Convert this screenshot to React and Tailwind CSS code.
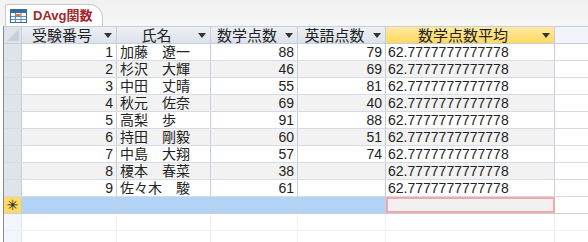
import React from "react";

const rows = [
  [1, "加藤　遼一", 88, 79],
  [2, "杉沢　大輝", 46, 69],
  [3, "中田　丈晴", 55, 81],
  [4, "秋元　佐奈", 69, 40],
  [5, "高梨　歩", 91, 88],
  [6, "持田　剛毅", 60, 51],
  [7, "中島　大翔", 57, 74],
  [8, "榎本　春菜", 38, null],
  [9, "佐々木　駿", 61, null],
];

const AVG = "62.7777777777778";

function Arrow() {
  return (
    <svg width="8" height="5" viewBox="0 0 8 5" className="shrink-0">
      <path d="M0 0H8L4 5Z" fill="#333" />
    </svg>
  );
}

function Head({ w, label, active }) {
  return (
    <div
      className={`${w} h-full flex items-center border-r border-[#c5cedb] ${
        active ? "bg-gradient-to-b from-[#ffeaa0] to-[#ffd85e]" : "bg-gradient-to-b from-[#edf0f5] to-[#dde2ea]"
      }`}
    >
      <div className="flex-1 text-center text-[15px] leading-[16px] text-[#222] font-['Noto_Sans_CJK_JP',sans-serif]">
        {label}
      </div>
      <div className="pr-[4px] pl-[2px] flex items-center">
        <Arrow />
      </div>
    </div>
  );
}

const num = "font-['Liberation_Sans',sans-serif] text-[14px]";
const jp = "font-['Liberation_Sans','Noto_Sans_CJK_JP',sans-serif] text-[14px]";

export default function App() {
  return (
    <div className="w-[588px] h-[242px] bg-white overflow-hidden flex flex-col text-[#222]">
      {/* tab strip */}
      <div className="h-[26px] shrink-0 bg-gradient-to-b from-[#f1f1f1] to-[#f7f7f7] flex items-end pl-[1px] border-l-[4px] border-[#f4f4f4]">
        <div className="relative h-[22px] w-[98px] bg-white border border-b-0 border-[#c9c9c9] rounded-tl-[2px] rounded-tr-[14px] flex items-center gap-[6px] pl-[4px]">
          <svg width="17" height="14" viewBox="0 0 17 14" className="shrink-0">
            <rect x="0.5" y="0.5" width="16" height="13" fill="#fff" stroke="#3a6b9e" />
            <rect x="1" y="1" width="15" height="3" fill="#3a6b9e" />
            <path d="M1 7.5H16M1 10.5H16M5.5 4V13M11 4V13" stroke="#5b8ec4" strokeWidth="1" />
            <rect x="6" y="5" width="4.5" height="2" fill="#e2793a" />
          </svg>
          <span className="whitespace-nowrap font-['Liberation_Sans','Noto_Sans_CJK_JP',sans-serif] font-bold text-[13px] leading-[16px] text-[#a4262c]">
            DAvg関数
          </span>
        </div>
      </div>
      <div className="flex-1 flex min-h-0">
        <div className="w-[3px] bg-white" />
        <div className="w-[1px] bg-[#8c8c8c]" />
        <div className="flex-1 flex flex-col">
          {/* header */}
          <div className="h-[18px] shrink-0 flex border-t border-[#9a9a9a] border-b border-[#c5cedb]">
            <div className="w-[18px] h-full bg-[#dfe3ea] border-r border-[#c5cedb] relative">
              <svg width="14" height="14" viewBox="0 0 14 14" className="absolute left-[2px] top-[1px]">
                <path d="M13 1V13H1Z" fill="#c9cfd8" />
              </svg>
            </div>
            <Head w="w-[95px]" label="受験番号" />
            <Head w="w-[94px]" label="氏名" />
            <Head w="w-[87px]" label="数学点数" />
            <Head w="w-[88px]" label="英語点数" />
            <Head w="w-[169px]" label="数学点数平均" active />
            <div className="flex-1 bg-[#f3f4fb]" />
          </div>
          {rows.map((r, i) => (
            <div
              key={r[0]}
              className={`h-[17px] shrink-0 flex border-b border-[#d4dbe7] ${i % 2 ? "bg-[#f2f2f2]" : "bg-white"}`}
            >
              <div className="w-[18px] bg-[#dfe3ea] border-r border-[#c5cedb]" />
              <div className={`w-[95px] border-r border-[#c5cedb] text-right pr-[3px] leading-[16px] ${num}`}>{r[0]}</div>
              <div className={`w-[94px] border-r border-[#c5cedb] pl-[3px] leading-[16px] whitespace-nowrap ${jp}`}>{r[1]}</div>
              <div className={`w-[87px] border-r border-[#c5cedb] text-right pr-[3px] leading-[16px] ${num}`}>{r[2]}</div>
              <div className={`w-[88px] border-r border-[#c5cedb] text-right pr-[3px] leading-[16px] ${num}`}>{r[3] ?? ""}</div>
              <div className={`w-[169px] border-r border-[#c5cedb] pl-[2px] leading-[16px] ${num}`}>{AVG}</div>
              <div className="flex-1 bg-white" />
            </div>
          ))}
          {/* new row */}
          <div className="h-[17px] shrink-0 flex border-b border-[#c5cedb]">
            <div className="w-[18px] bg-[#ffd966] border-r border-[#c5cedb] flex items-center justify-center text-[14px] leading-[14px] font-['DejaVu_Sans',sans-serif]">
              ✳
            </div>
            <div className="w-[95px] bg-[#b2d3f6] border-r border-[#c5cedb]" />
            <div className="w-[94px] bg-[#b2d3f6] border-r border-[#c5cedb]" />
            <div className="w-[87px] bg-[#b2d3f6] border-r border-[#c5cedb]" />
            <div className="w-[88px] bg-[#b2d3f6] border-r border-[#c5cedb]" />
            <div className="w-[169px] bg-[#f0f0f0] border-2 border-[#f4a6aa]" />
            <div className="flex-1 bg-white" />
          </div>
          {[0, 1].map((k) => (
            <div key={k} className="h-[17px] shrink-0 flex border-b border-[#eef0f5]">
              <div className="w-[18px] bg-[#f3f5fc] border-r border-[#e4e8f0]" />
              <div className="w-[95px] border-r border-[#eef0f5]" />
              <div className="w-[94px] border-r border-[#eef0f5]" />
              <div className="w-[87px] border-r border-[#eef0f5]" />
              <div className="w-[88px] border-r border-[#eef0f5]" />
              <div className="w-[169px] border-r border-[#eef0f5]" />
              <div className="flex-1" />
            </div>
          ))}
        </div>
      </div>
    </div>
  );
}
